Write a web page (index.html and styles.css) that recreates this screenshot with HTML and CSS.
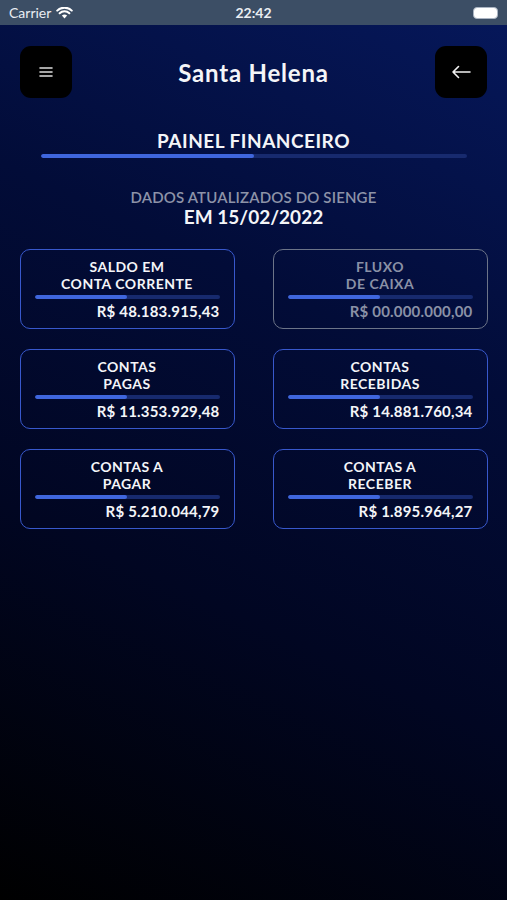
FILE: index.html
```html
<!DOCTYPE html>
<html lang="pt-BR">
<head>
  <meta charset="UTF-8" />
  <meta name="viewport" content="width=device-width, initial-scale=1.0"/>
  <title>Painel Financeiro</title>
<link rel="stylesheet" href="styles.css">
</head>
<body>
  <div class="status-bar">
    <div class="carrier">
      Carrier
      <svg class="wifi" width="17" height="12" viewBox="0 0 17 12">
        <path d="M8.5 11.5 L5.9 8.6 A3.8 3.8 0 0 1 11.1 8.6 Z" fill="#fff"/>
        <path d="M3.6 6.3 A7 7 0 0 1 13.4 6.3" stroke="#fff" stroke-width="2" fill="none" stroke-linecap="round"/>
        <path d="M1.2 3.6 A10.5 10.5 0 0 1 15.8 3.6" stroke="#fff" stroke-width="2" fill="none" stroke-linecap="round"/>
      </svg>
    </div>
    <div class="clock">22:42</div>
    <div class="battery"><span class="battery-level"></span></div>
  </div>

  <header class="topbar">
    <button class="icon-btn" aria-label="Menu">
      <svg width="14" height="12" viewBox="0 0 14 12">
        <path d="M1 2h12M1 6h12M1 10h12" stroke="#ddd" stroke-width="1.6" stroke-linecap="round"/>
      </svg>
    </button>
    <h1>Santa Helena</h1>
    <button class="icon-btn" aria-label="Voltar">
      <svg width="20" height="14" viewBox="0 0 20 14">
        <path d="M19 7H2M7.5 1.5L2 7l5.5 5.5" stroke="#f2f2f2" stroke-width="1.6" fill="none" stroke-linecap="round" stroke-linejoin="round"/>
      </svg>
    </button>
  </header>

  <main>
    <h2 class="panel-title">PAINEL FINANCEIRO</h2>
    <div class="progress wide"><span style="width: 50%"></span></div>

    <p class="update-label">DADOS ATUALIZADOS DO SIENGE</p>
    <p class="update-date">EM 15/02/2022</p>

    <section class="cards">
      <div class="card">
        <h3>SALDO EM<br>CONTA CORRENTE</h3>
        <div class="progress"><span style="width: 50%"></span></div>
        <p class="valor">R$ 48.183.915,43</p>
      </div>
      <div class="card disabled">
        <h3>FLUXO<br>DE CAIXA</h3>
        <div class="progress"><span style="width: 50%"></span></div>
        <p class="valor">R$ 00.000.000,00</p>
      </div>
      <div class="card">
        <h3>CONTAS<br>PAGAS</h3>
        <div class="progress"><span style="width: 50%"></span></div>
        <p class="valor">R$ 11.353.929,48</p>
      </div>
      <div class="card">
        <h3>CONTAS<br>RECEBIDAS</h3>
        <div class="progress"><span style="width: 50%"></span></div>
        <p class="valor">R$ 14.881.760,34</p>
      </div>
      <div class="card">
        <h3>CONTAS A<br>PAGAR</h3>
        <div class="progress"><span style="width: 50%"></span></div>
        <p class="valor">R$ 5.210.044,79</p>
      </div>
      <div class="card">
        <h3>CONTAS A<br>RECEBER</h3>
        <div class="progress"><span style="width: 50%"></span></div>
        <p class="valor">R$ 1.895.964,27</p>
      </div>
    </section>
  </main>
</body>
</html>
```

FILE: styles.css
```css
* {
  box-sizing: border-box;
}

body {
  margin: 0;
  min-height: 100vh;
  font-family: 'Lato', 'Noto Sans', sans-serif;
  color: #f4f5f8;
  background: linear-gradient(205deg, #06185c 0%, #020c38 35%, #010622 65%, #000 100%);
}

.status-bar {
  height: 25px;
  background: #3c4e65;
  display: flex;
  align-items: center;
  justify-content: space-between;
  padding: 0 9px 0 9px;
  font-size: 14px;
  color: #e9edf3;
}

.carrier {
  display: flex;
  align-items: center;
  gap: 5px;
  width: 120px;
}

.clock {
  font-weight: bold;
  font-size: 14px;
}

.battery {
  width: 120px;
  display: flex;
  justify-content: flex-end;
}

.battery-level {
  display: block;
  width: 25px;
  height: 12px;
  border-radius: 4px;
  border: 1.5px solid #aab4c2;
  background: #fff;
}

.topbar {
  display: flex;
  align-items: center;
  justify-content: space-between;
  padding: 21px 20px 0 20px;
}

.topbar h1 {
  margin: 0;
  font-size: 24px;
  font-weight: bold;
  letter-spacing: 0.8px;
}

.icon-btn {
  width: 52px;
  height: 52px;
  border: none;
  border-radius: 11px;
  background: #000;
  display: flex;
  align-items: center;
  justify-content: center;
  padding: 0;
}

main {
  display: flex;
  flex-direction: column;
  align-items: center;
}

.panel-title {
  margin: 32px 0 0;
  font-size: 19px;
  line-height: 22px;
  font-weight: bold;
  letter-spacing: 0.5px;
}

.progress {
  width: 100%;
  height: 4px;
  border-radius: 2px;
  background: #172a6e;
  overflow: hidden;
}

.progress span {
  display: block;
  height: 100%;
  border-radius: 2px;
  background: #3f66dd;
}

.progress.wide {
  width: 426px;
  margin-top: 2px;
}

.update-label {
  margin: 30px 0 0;
  font-size: 15px;
  line-height: 18px;
  color: #8d93a8;
  font-weight: 600;
  letter-spacing: 0.15px;
}

.update-date {
  margin: 0;
  font-size: 19px;
  line-height: 22px;
  font-weight: bold;
}

.cards {
  margin-top: 21px;
  display: grid;
  grid-template-columns: 215px 215px;
  column-gap: 38px;
  row-gap: 20px;
}

.card {
  height: 80px;
  border: 1.5px solid #3858cc;
  border-radius: 10px;
  padding: 8px 14px 0;
  text-align: center;
}

.card h3 {
  margin: 0;
  font-size: 14px;
  line-height: 17px;
  font-weight: bold;
  letter-spacing: 0.5px;
}

.card .progress {
  margin-top: 3px;
}

.card .valor {
  margin: 3px 0 0;
  text-align: right;
  font-size: 15px;
  line-height: 18px;
  font-weight: bold;
  letter-spacing: 0.2px;
}

.card.disabled {
  border-color: #6c7488;
}

.card.disabled h3,
.card.disabled .valor {
  color: #8a91a6;
}
```
